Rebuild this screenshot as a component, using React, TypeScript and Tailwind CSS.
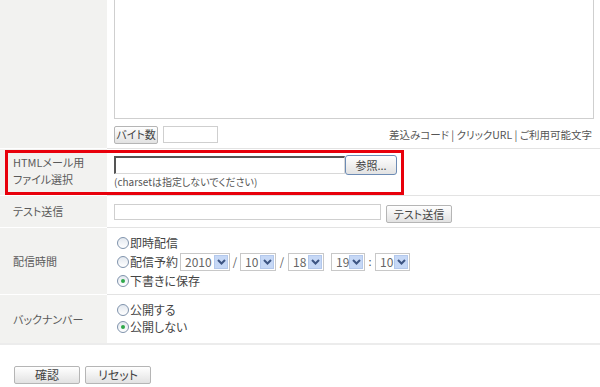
import React from 'react'

const font = { fontFamily: '"Noto Sans CJK JP", "Liberation Sans", sans-serif' }

function Radio({ checked = false, label }: { checked?: boolean; label: string }) {
  return (
    <label className="flex items-center h-[19px] text-[12px] text-[#444]">
      <span className="w-[12px] h-[12px] rounded-full border border-[#7f93ac] bg-gradient-to-b from-[#e3e8ef] to-white mr-[1px] flex items-center justify-center">
        {checked && <span className="w-[4px] h-[4px] rounded-full bg-[#2fa84a]" />}
      </span>
      {label}
    </label>
  )
}

function Sel({ value, w }: { value: string; w: string }) {
  return (
    <span className={`inline-flex items-center justify-between h-[18px] border border-[#c8c8c8] bg-white pl-[4px] pr-[1px] text-[12px] text-[#666] ${w}`}>
      <span className="leading-none">{value}</span>
      <span className="w-[14px] h-[14px] bg-[#c6d8f6] border border-[#b3c8ec] flex items-center justify-center">
        <svg width="9" height="6" viewBox="0 0 9 6">
          <path d="M1 1 L4.5 4.5 L8 1" stroke="#3d5583" strokeWidth="2" fill="none" />
        </svg>
      </span>
    </span>
  )
}

function Btn({ children, w, blue = false }: { children: React.ReactNode; w: string; blue?: boolean }) {
  return (
    <button
      className={`${w} text-[11px] text-[#444] leading-none bg-gradient-to-b from-white to-[#e2e2e2] border ${
        blue ? 'border-[#6c8bb4] rounded-[3px] h-[20px]' : 'border-[#b5b5b5] rounded-[2px] h-[18px]'
      }`}
    >
      {children}
    </button>
  )
}

export default function App() {
  return (
    <div
      className="relative w-[600px] h-[387px] overflow-hidden bg-white [font-feature-settings:'palt']"
      style={font}
    >
      {/* table */}
      <div className="flex flex-col">
        {/* body row */}
        <div className="flex">
          <div className="w-[107px] bg-[#f2f2f0] border-b border-white" />
          <div className="flex-1 pl-[7px] pr-[6px] pb-[5px] border-b border-[#e3e3e3]">
            <div className="mt-[-10px] h-[129px] border border-[#cfcfcf] bg-white" />
            <div className="flex items-center mt-[7px] h-[17px]">
              <Btn w="w-[44px]">バイト数</Btn>
              <span className="ml-[5px] w-[55px] h-[17px] border border-[#cfcfcf] bg-white" />
              <span className="ml-auto text-[10.5px] text-[#555] pr-[2px]">
                差込みコード | クリックURL | ご利用可能文字
              </span>
            </div>
          </div>
        </div>

        {/* HTML file row */}
        <div className="flex h-[47px]">
          <div className="w-[107px] bg-[#f2f2f0] border-b border-white pl-[13px] pt-[5px] text-[11px] leading-[17px] text-[#5a5a5a]">
            HTMLメール用
            <br />
            ファイル選択
          </div>
          <div className="flex-1 pl-[7px] pt-[6px] border-b border-[#e3e3e3]">
            <div className="flex items-center">
              <span className="w-[231px] h-[18px] bg-white border-t-2 border-l-2 border-b border-r border-t-[#555] border-l-[#555] border-b-[#d8d8d8] border-r-[#d8d8d8]" />
              <Btn w="w-[52px]" blue>
                参照...
              </Btn>
            </div>
            <div className="text-[10px] text-[#555] leading-[14px]">(charsetは指定しないでください)</div>
          </div>
        </div>

        {/* test send row */}
        <div className="flex h-[32px]">
          <div className="w-[107px] bg-[#f2f2f0] border-b border-white pl-[13px] flex items-center text-[11px] text-[#5a5a5a]">
            テスト送信
          </div>
          <div className="flex-1 pl-[7px] flex items-center border-b border-[#e3e3e3]">
            <span className="w-[267px] h-[16px] border border-[#cfcfcf] bg-white" />
            <span className="ml-[5px]">
              <Btn w="w-[66px]">テスト送信</Btn>
            </span>
          </div>
        </div>

        {/* delivery time row */}
        <div className="flex h-[67px]">
          <div className="w-[107px] bg-[#f2f2f0] border-b border-white pl-[13px] flex items-center text-[11px] text-[#5a5a5a]">
            配信時間
          </div>
          <div className="flex-1 pl-[10px] pt-[5px] border-b border-[#e3e3e3]">
            <Radio label="即時配信" />
            <div className="flex items-center">
              <Radio label="配信予約" />
              <span className="ml-[2px]" />
              <Sel value="2010" w="w-[50px]" />
              <span className="text-[11px] text-[#555] w-[10px] text-center">/</span>
              <Sel value="10" w="w-[36px]" />
              <span className="text-[11px] text-[#555] w-[12px] text-center">/</span>
              <Sel value="18" w="w-[36px]" />
              <span className="w-[7px]" />
              <Sel value="19" w="w-[34px]" />
              <span className="text-[11px] text-[#555] w-[10px] text-center">:</span>
              <Sel value="10" w="w-[35px]" />
            </div>
            <Radio checked label="下書きに保存" />
          </div>
        </div>

        {/* back number row */}
        <div className="flex h-[50px]">
          <div className="w-[107px] bg-[#f2f2f0] border-b-2 border-[#ececec] pl-[13px] flex items-center text-[11px] text-[#5a5a5a]">
            バックナンバー
          </div>
          <div className="flex-1 pl-[10px] pt-[6px] border-b-2 border-[#ececec]">
            <div className="mt-[-1px]">
              <Radio label="公開する" />
            </div>
            <div className="mt-[-2px]">
              <Radio checked label="公開しない" />
            </div>
          </div>
        </div>
      </div>

      {/* footer buttons */}
      <div className="flex gap-[5px] pl-[14px] mt-[21px]">
        <Btn w="w-[66px]">
          <span className="text-[12px]">確認</span>
        </Btn>
        <Btn w="w-[66px]">
          <span className="text-[12px]">リセット</span>
        </Btn>
      </div>

      {/* highlight overlay */}
      <div className="absolute left-[5px] top-[150px] w-[399px] h-[45px] border-[3px] border-[#e8000b] pointer-events-none" />
    </div>
  )
}
